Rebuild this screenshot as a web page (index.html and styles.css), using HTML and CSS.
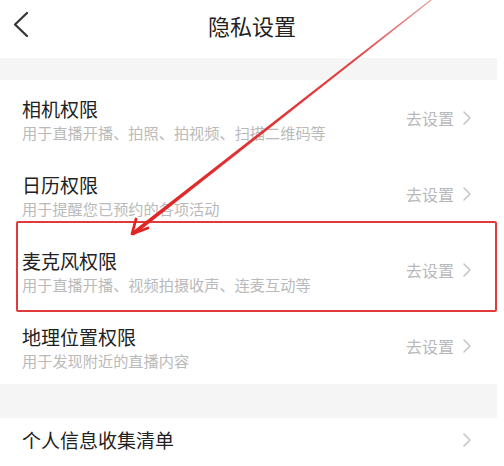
FILE: index.html
```html
<!DOCTYPE html>
<html lang="zh-CN">
<head>
<meta charset="utf-8">
<title>隐私设置</title>
<link rel="stylesheet" href="styles.css">
</head>
<body>
<div class="page">
  <header class="nav">
    <svg class="back" width="16" height="26" viewBox="0 0 16 26"><polyline points="14,1 2,12.5 14,24" fill="none" stroke="#333" stroke-width="2.2" stroke-linecap="round" stroke-linejoin="round"/></svg>
    <h1 class="nav-title">隐私设置</h1>
  </header>
  <div class="gap gap-top"></div>
  <ul class="list">
    <li class="row">
      <div class="text"><div class="title">相机权限</div><div class="desc">用于直播开播、拍照、拍视频、扫描二维码等</div></div>
      <div class="action">去设置<svg class="chev" width="10" height="14" viewBox="0 0 10 14"><polyline points="2,1 8,7 2,13" fill="none" stroke="#c6c6c6" stroke-width="1.6" stroke-linecap="round" stroke-linejoin="round"/></svg></div>
    </li>
    <li class="row">
      <div class="text"><div class="title">日历权限</div><div class="desc">用于提醒您已预约的各项活动</div></div>
      <div class="action">去设置<svg class="chev" width="10" height="14" viewBox="0 0 10 14"><polyline points="2,1 8,7 2,13" fill="none" stroke="#c6c6c6" stroke-width="1.6" stroke-linecap="round" stroke-linejoin="round"/></svg></div>
    </li>
    <li class="row">
      <div class="text"><div class="title">麦克风权限</div><div class="desc">用于直播开播、视频拍摄收声、连麦互动等</div></div>
      <div class="action">去设置<svg class="chev" width="10" height="14" viewBox="0 0 10 14"><polyline points="2,1 8,7 2,13" fill="none" stroke="#c6c6c6" stroke-width="1.6" stroke-linecap="round" stroke-linejoin="round"/></svg></div>
    </li>
    <li class="row">
      <div class="text"><div class="title">地理位置权限</div><div class="desc">用于发现附近的直播内容</div></div>
      <div class="action">去设置<svg class="chev" width="10" height="14" viewBox="0 0 10 14"><polyline points="2,1 8,7 2,13" fill="none" stroke="#c6c6c6" stroke-width="1.6" stroke-linecap="round" stroke-linejoin="round"/></svg></div>
    </li>
  </ul>
  <div class="gap gap-mid"></div>
  <ul class="list">
    <li class="row row-single">
      <div class="text"><div class="title">个人信息收集清单</div></div>
      <div class="action"><svg class="chev" width="10" height="14" viewBox="0 0 10 14"><polyline points="2,1 8,7 2,13" fill="none" stroke="#c6c6c6" stroke-width="1.6" stroke-linecap="round" stroke-linejoin="round"/></svg></div>
    </li>
  </ul>

  <div class="highlight"></div>
  <svg class="annot" width="504" height="466" viewBox="0 0 504 466">
    <defs>
      <linearGradient id="fade" x1="431" y1="0" x2="132" y2="234" gradientUnits="userSpaceOnUse">
        <stop offset="0" stop-color="#e8a0a0"/>
        <stop offset="0.25" stop-color="#e04040"/>
        <stop offset="1" stop-color="#e02424"/>
      </linearGradient>
    </defs>
    <polygon points="431.4,0.5 430.6,-0.5 131.3,232.4 133.7,235.6" fill="url(#fade)"/>
    <polyline points="136,219 132,234 148,228" fill="none" stroke="#e02424" stroke-width="2.8" stroke-linecap="round" stroke-linejoin="round"/>
  </svg>
</div>
</body>
</html>
```

FILE: styles.css
```css
* { box-sizing: border-box; }
html, body { margin: 0; padding: 0; background: #fff; }
body {
  font-family: "Noto Sans CJK SC", "Noto Sans", sans-serif;
  width: 504px;
  height: 466px;
  overflow: hidden;
}
.page { position: relative; width: 504px; height: 466px; overflow: hidden; }
.nav {
  height: 58px;
  display: flex;
  align-items: center;
  justify-content: center;
  position: relative;
}
.back { position: absolute; left: 13px; top: 12px; }
.nav-title {
  margin: 0;
  font-size: 22px;
  font-weight: 400;
  color: #222;
  line-height: 30px;
  margin-top: -8px;
}
.gap { background: #f5f5f5; margin-right: 7px; }
.gap-top { height: 22px; }
.gap-mid { height: 34px; }
.list { list-style: none; margin: 0; padding: 0; }
.row {
  height: 76px;
  display: flex;
  align-items: center;
  justify-content: space-between;
  padding: 0 32px 0 22px;
}
.row-single { height: 50px; padding-bottom: 6px; }
.text { display: flex; flex-direction: column; padding-top: 3px; }
.row-single .text { padding-top: 0; }
.title { font-size: 19px; line-height: 24px; color: #222; }
.desc { font-size: 15.2px; line-height: 20px; color: #bababa; margin-top: 1px; }
.action {
  display: flex;
  align-items: center;
  gap: 8px;
  font-size: 16px;
  color: #b8b8b8;
  line-height: 20px;
}
.chev { display: block; }
.highlight {
  position: absolute;
  left: 16px;
  top: 221px;
  width: 481px;
  height: 91px;
  border: 2px solid #e03a3a;
  border-radius: 2px;
}
.annot { position: absolute; left: 0; top: 0; pointer-events: none; }
```
